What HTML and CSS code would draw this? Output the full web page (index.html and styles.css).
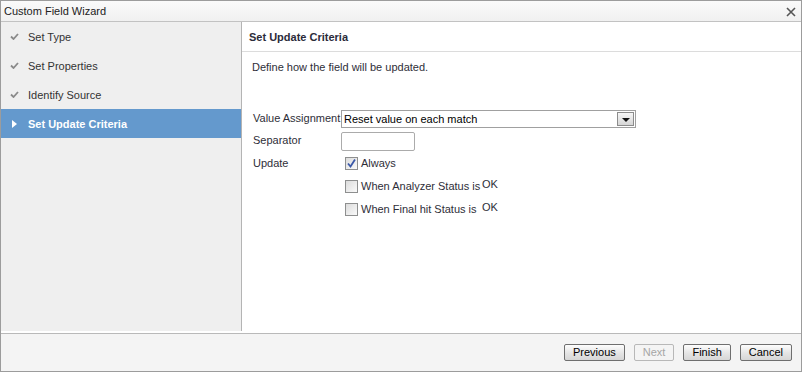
FILE: index.html
```html
<!DOCTYPE html>
<html lang="en">
<head>
    <meta charset="UTF-8">
    <title>Custom Field Wizard</title>
    <link rel="stylesheet" href="styles.css">
</head>
<body>
    <div class="window">
        <div class="titlebar">
            <span>Custom Field Wizard</span>
            <svg class="close" width="10" height="10" viewBox="0 0 10 10"><path d="M1 1L9 9M9 1L1 9" stroke="#555" stroke-width="1.6"/></svg>
        </div>
        <div class="main">
            <!-- wizard steps -->
            <div class="steps">
                <div class="step done">
                    <svg class="check" width="9" height="7" viewBox="0 0 9 7"><path d="M1 3.5L3.5 6L8 1" fill="none" stroke="#8a8a8a" stroke-width="1.8"/></svg>
                    Set Type
                </div>
                <div class="step done">
                    <svg class="check" width="9" height="7" viewBox="0 0 9 7"><path d="M1 3.5L3.5 6L8 1" fill="none" stroke="#8a8a8a" stroke-width="1.8"/></svg>
                    Set Properties
                </div>
                <div class="step done">
                    <svg class="check" width="9" height="7" viewBox="0 0 9 7"><path d="M1 3.5L3.5 6L8 1" fill="none" stroke="#8a8a8a" stroke-width="1.8"/></svg>
                    Identify Source
                </div>
                <div class="step active">
                    <span class="arrow"></span>
                    Set Update Criteria
                </div>
            </div>
            <!-- current step -->
            <div class="content">
                <div class="content-header">Set Update Criteria</div>
                <div class="content-body">
                    <p class="intro">Define how the field will be updated.</p>
                    <div class="form">
                        <label class="form-label">Value Assignment</label>
                        <div class="select">
                            <span>Reset value on each match</span>
                            <span class="select-btn"><span class="down"></span></span>
                        </div>
                        <label class="form-label">Separator</label>
                        <div><input type="text" class="textbox"></div>
                        <label class="form-label">Update</label>
                        <div class="checks">
                            <div class="check-row"><span class="box checked"><svg width="11" height="11" viewBox="0 0 11 11"><path d="M2 5.5L4.5 8.5L9 1.5" fill="none" stroke="#3a58a8" stroke-width="1.8"/></svg></span>Always</div>
                            <div class="check-row"><span class="box"></span><span class="cond">When Analyzer Status is</span><span class="ok">OK</span></div>
                            <div class="check-row"><span class="box"></span><span class="cond">When Final hit Status is</span><span class="ok">OK</span></div>
                        </div>
                    </div>
                </div>
            </div>
        </div>
        <div class="footer">
            <button class="btn">Previous</button>
            <button class="btn" disabled>Next</button>
            <button class="btn">Finish</button>
            <button class="btn">Cancel</button>
        </div>
    </div>
</body>
</html>
```

FILE: styles.css
```css
body {
    margin: 0;
    font-family: "Liberation Sans", Arial, sans-serif;
    font-size: 11px;
    color: #2e2e38;
}
.window {
    width: 802px;
    height: 372px;
    box-sizing: border-box;
    border: 1px solid #9c9c9c;
    display: flex;
    flex-direction: column;
    background: #fff;
}
.titlebar {
    height: 20px;
    border-bottom: 1px solid #c2c2c2;
    background: linear-gradient(#fafafa, #f0f0f0);
    display: flex;
    align-items: center;
    justify-content: space-between;
    padding: 0 5px 0 3px;
    font-size: 11px;
    color: #222;
}
.close {
    margin-top: 1px;
}
.main {
    height: 309px;
    display: flex;
}
.steps {
    width: 240px;
    background-color: #efefef;
    border-right: 1px solid #b4b4b4;
}
.step {
    height: 29px;
    display: flex;
    align-items: center;
    padding-left: 9px;
    gap: 9px;
    color: #333;
}
.step.active {
    background-color: #6499cd;
    color: #fff;
    font-weight: bold;
    gap: 11px;
    padding-left: 11px;
}
.arrow {
    width: 0;
    height: 0;
    border-top: 4px solid transparent;
    border-bottom: 4px solid transparent;
    border-left: 5px solid #fff;
}
.content {
    flex: 1;
    display: flex;
    flex-direction: column;
}
.content-header {
    height: 29px;
    border-bottom: 1px solid #dcdcdc;
    display: flex;
    align-items: center;
    padding-left: 7px;
    font-weight: bold;
    color: #2b2b3a;
}
.content-body {
    padding: 0 10px;
}
.intro {
    margin: 9px 0 0;
}
.form {
    margin-top: 37px;
    margin-left: 1px;
    display: grid;
    grid-template-columns: 88px 1fr;
    row-gap: 4px;
    align-items: start;
}
.form-label {
    line-height: 16px;
    white-space: nowrap;
}
.select {
    width: 295px;
    height: 18px;
    box-sizing: border-box;
    border: 1px solid #a0a0a0;
    display: flex;
    align-items: center;
    justify-content: space-between;
    padding-left: 2px;
    color: #000;
}
.select-btn {
    width: 17px;
    height: 14px;
    margin-right: 1px;
    box-sizing: border-box;
    border: 1px solid #8c8c8c;
    background: linear-gradient(#f6f6f6, #d6d6d6);
    display: flex;
    align-items: center;
    justify-content: center;
}
.down {
    width: 0;
    height: 0;
    border-left: 4px solid transparent;
    border-right: 4px solid transparent;
    border-top: 4px solid #111;
    margin-top: 2px;
}
.textbox {
    width: 74px;
    height: 19px;
    box-sizing: border-box;
    border: 1px solid #ababab;
    border-radius: 2px;
    margin: 0;
    padding: 0;
}
.checks {
    display: flex;
    flex-direction: column;
    gap: 7px;
    padding-left: 4px;
}
.check-row {
    display: flex;
    align-items: center;
    height: 16px;
    white-space: nowrap;
}
.box {
    width: 13px;
    height: 13px;
    box-sizing: border-box;
    border: 1px solid #8e8f8f;
    background: linear-gradient(135deg, #dcdcdc, #fafafa);
    margin-right: 3px;
    display: flex;
    align-items: center;
    justify-content: center;
}
.box.checked svg {
    display: block;
}
.cond {
    width: 121px;
}
.ok {
    position: relative;
    top: -2px;
}
.footer {
    margin-top: 2px;
    border-top: 1px solid #b9b9b9;
    flex: 1;
    background-color: #f4f4f4;
    display: flex;
    align-items: center;
    justify-content: flex-end;
    gap: 9px;
    padding-right: 9px;
}
.btn {
    height: 17px;
    padding: 0 8px;
    border: 1px solid #6f6f6f;
    border-radius: 2px;
    background: linear-gradient(#fdfdfd, #e4e4e4 55%, #d6d6d6);
    font-family: "Liberation Sans", Arial, sans-serif;
    font-size: 11px;
    color: #000;
    line-height: 15px;
}
.btn:disabled {
    border-color: #b8b8b8;
    color: #a6a6a6;
    background: #f4f4f4;
}
```
